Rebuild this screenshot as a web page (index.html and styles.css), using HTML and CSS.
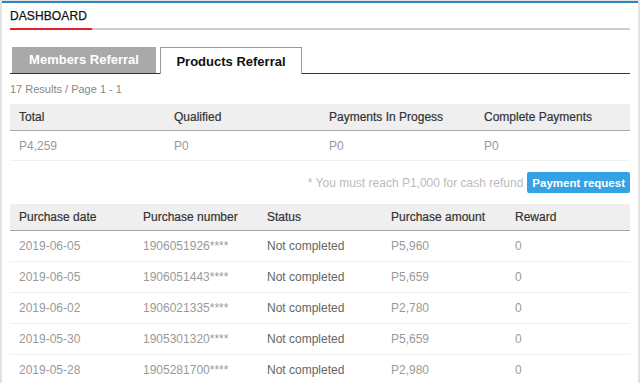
FILE: index.html
```html
<!DOCTYPE html>
<html lang="en">
<head>
<meta charset="UTF-8">
<meta name="viewport" content="width=device-width, initial-scale=1">
<title>Dashboard - Referral</title>
<link rel="stylesheet" href="styles.css">
</head>
<body>
<div class="page">
    <div class="page-header">
        <span class="page-title">DASHBOARD</span>
    </div>

    <div class="tabs">
        <div class="tab">Members Referral</div>
        <div class="tab active">Products Referral</div>
    </div>

    <div class="results">17 Results / Page 1 - 1</div>

    <table class="grid summary">
        <thead>
            <tr>
                <th>Total</th>
                <th>Qualified</th>
                <th>Payments In Progess</th>
                <th>Complete Payments</th>
            </tr>
        </thead>
        <tbody>
            <tr>
                <td>P4,259</td>
                <td>P0</td>
                <td>P0</td>
                <td>P0</td>
            </tr>
        </tbody>
    </table>

    <div class="refund-bar">
        <span class="refund-note">* You must reach P1,000 for cash refund</span>
        <button class="btn-request">Payment request</button>
    </div>

    <table class="grid purchases">
        <thead>
            <tr>
                <th>Purchase date</th>
                <th>Purchase number</th>
                <th>Status</th>
                <th>Purchase amount</th>
                <th>Reward</th>
            </tr>
        </thead>
        <tbody>
            <tr><td>2019-06-05</td><td>1906051926****</td><td class="status">Not completed</td><td>P5,960</td><td>0</td></tr>
            <tr><td>2019-06-05</td><td>1906051443****</td><td class="status">Not completed</td><td>P5,659</td><td>0</td></tr>
            <tr><td>2019-06-02</td><td>1906021335****</td><td class="status">Not completed</td><td>P2,780</td><td>0</td></tr>
            <tr><td>2019-05-30</td><td>1905301320****</td><td class="status">Not completed</td><td>P5,659</td><td>0</td></tr>
            <tr><td>2019-05-28</td><td>1905281700****</td><td class="status">Not completed</td><td>P2,980</td><td>0</td></tr>
        </tbody>
    </table>
</div>
</body>
</html>
```

FILE: styles.css
```css
:root {
    --brand-red: #e3202a;
    --head-bg: #efefef;
    --muted: #9a9a9a;
}

body {
    margin: 0;
    padding-top: 1px;
    background: #e2e2e2;
    font-family: "Liberation Sans", Arial, sans-serif;
    font-size: 12px;
    color: #333;
    overflow: hidden;
}

.page {
    width: 636px;
    height: 400px;
    margin-left: 2px;
    padding: 0 8px;
    box-sizing: border-box;
    background: #fff;
    border-top: 2px solid #2d86c0;
}

.page-header {
    border-bottom: 2px solid #ccc;
    height: 25px;
}

.page-title {
    display: inline-block;
    padding: 6px 5px 5px 0;
    line-height: 14px;
    font-size: 12px;
    color: #111;
    letter-spacing: 0.1px;
    -webkit-text-stroke: 0.25px #111;
    border-bottom: 2px solid var(--brand-red);
}

.tabs {
    display: flex;
    align-items: flex-end;
    gap: 4px;
    margin-top: 17px;
    padding-left: 2px;
    border-bottom: 1px solid #333;
    height: 26px;
}

.tab {
    width: 144px;
    height: 26px;
    box-sizing: border-box;
    background: #a9a9a9;
    color: #fff;
    font-size: 13px;
    font-weight: bold;
    line-height: 26px;
    text-align: center;
}

.tab.active {
    width: 142px;
    height: 27px;
    margin-bottom: -1px;
    background: #fff;
    color: #111;
    border: 1px solid #999;
    border-bottom: none;
    line-height: 27px;
}

.results {
    margin-top: 8px;
    line-height: 15px;
    font-size: 11px;
    color: #888;
}

.grid {
    width: 100%;
    border-collapse: collapse;
    table-layout: fixed;
}

.grid th {
    height: 26px;
    padding: 0 9px;
    background: var(--head-bg);
    border-bottom: 1px solid #a5a5a5;
    text-align: left;
    font-weight: normal;
    color: #333;
    -webkit-text-stroke: 0.2px #333;
}

.grid td {
    padding: 0 9px;
    border-bottom: 1px solid #f0f0f0;
    color: var(--muted);
    white-space: nowrap;
}

.summary {
    margin-top: 7px;
}

.summary td {
    height: 29px;
}

.refund-bar {
    display: flex;
    justify-content: flex-end;
    align-items: center;
    gap: 4px;
    margin-top: 11px;
}

.refund-note {
    color: #bbb;
}

.btn-request {
    height: 21px;
    padding: 0 5px;
    border: none;
    border-radius: 2px;
    background: #36a2e6;
    color: #fff;
    font-family: inherit;
    font-size: 11.5px;
    font-weight: bold;
}

.purchases {
    margin-top: 11px;
}

.purchases td {
    height: 30px;
}

.purchases td.status {
    color: #666;
}
```
